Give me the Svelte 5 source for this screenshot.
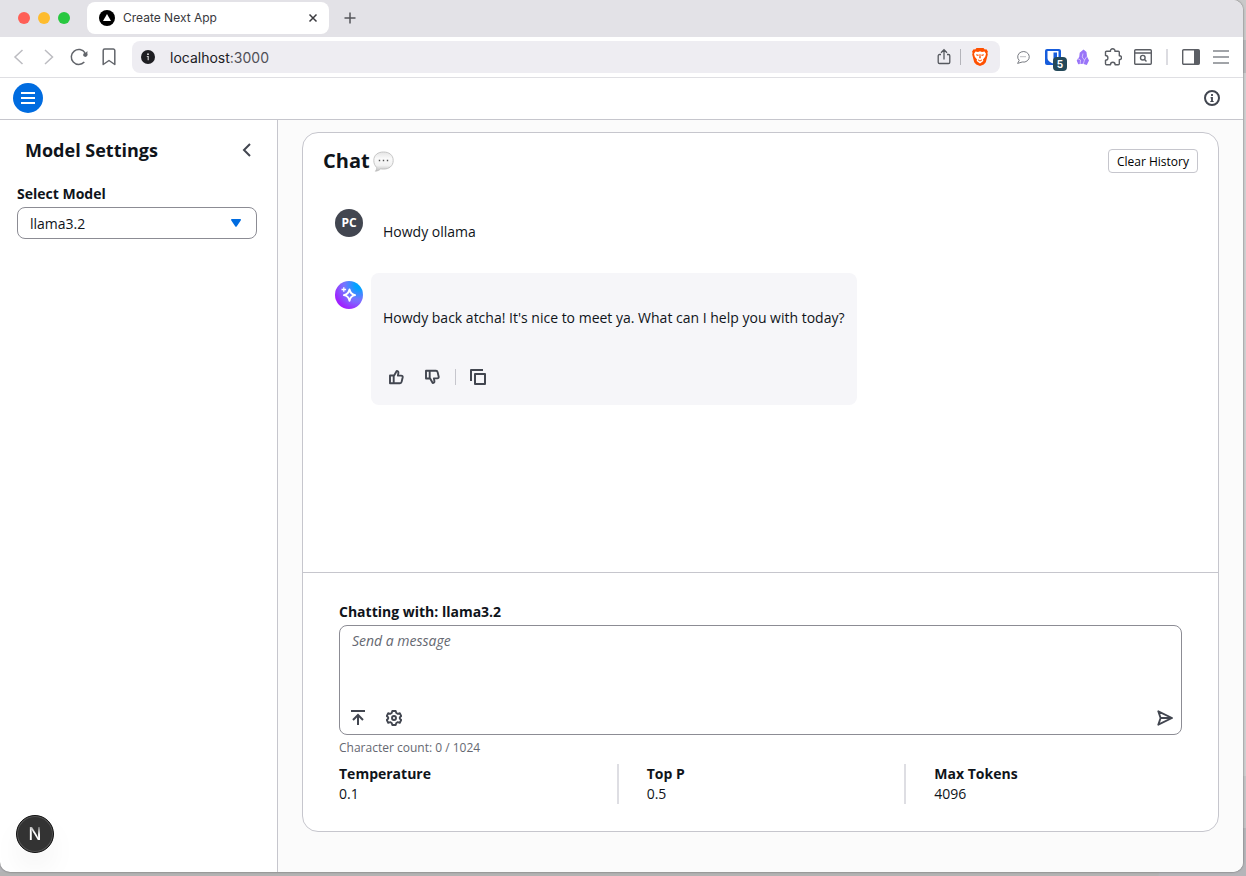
<script>
  let model = $state('llama3.2');
  let message = $state('');
  const params = [
    { name: 'Temperature', value: '0.1' },
    { name: 'Top P', value: '0.5' },
    { name: 'Max Tokens', value: '4096' }
  ];
</script>

<div class="desktop">
  <div class="window">
    <div class="tabbar">
      <div class="lights"><i class="red"></i><i class="amber"></i><i class="green"></i></div>
      <div class="tab">
        <svg width="16" height="16" viewBox="0 0 16 16"><circle cx="8" cy="8" r="8" /><path d="M8 4l4 7H4z" fill="#fff" /></svg>
        <span>Create Next App</span>
        <button aria-label="Close tab">
          <svg width="10" height="10" viewBox="0 0 10 10" stroke="#3b3b40" stroke-width="1.5"><path d="M1.5 1.5l7 7M8.500 1.500l-7 7" /></svg>
        </button>
      </div>
      <button class="newtab" aria-label="New tab">
        <svg width="12" height="12" viewBox="0 0 12 12" stroke="#55555b" stroke-width="1.500"><path d="M6 .5v11M.5 6h11" /></svg>
      </button>
    </div>

    <div class="toolbar">
      <div class="nav">
        <button aria-label="Back"><svg width="20" height="20" viewBox="0 0 20 20" fill="none" stroke="#bcbcc1" stroke-width="1.500"><path d="M13.500 3L6 10l7.500 7" /></svg></button>
        <button aria-label="Forward"><svg width="20" height="20" viewBox="0 0 20 20" fill="none" stroke="#bcbcc1" stroke-width="1.500"><path d="M6 3l7.500 7L6 17" /></svg></button>
        <button aria-label="Reload"><svg width="20" height="20" viewBox="0 0 20 20" fill="none" stroke="#62656b" stroke-width="1.500"><path d="M15.300 15.100a7.500 7.500 0 1 1 .8-9.200" /><circle cx="16.300" cy="7.800" r="2.100" fill="#62656b" stroke="none" /><path d="M18.400 4v4.500H14z" fill="#62656b" stroke="none" /></svg></button>
        <button aria-label="Bookmark"><svg width="20" height="20" viewBox="0 0 20 20" fill="none" stroke="#62656b" stroke-width="1.500" stroke-linejoin="round"><path d="M4.200 3.500a1.500 1.500 0 0 1 1.500-1.500h8.600a1.500 1.500 0 0 1 1.500 1.500V17.500L10 13.500l-5.800 4z" /></svg></button>
      </div>
      <div class="address">
        <svg width="14" height="14" viewBox="0 0 14 14"><circle cx="7" cy="7" r="7" fill="#1e1e22" /><circle cx="7" cy="4.200" r=".9" fill="#eee" /><path d="M5.800 6.500H7.200v3.700" fill="none" stroke="#ccc" stroke-width="1.200" /></svg>
        <span class="url">localhost<em>:3000</em></span>
        <button aria-label="Share"><svg width="16" height="18" viewBox="0 0 16 18" fill="none" stroke="#55585e" stroke-width="1.300"><path d="M5 6.500H3.500A1.300 1.300 0 0 0 2.200 7.800v6.400a1.300 1.300 0 0 0 1.300 1.300h9a1.300 1.300 0 0 0 1.300-1.300V7.800a1.300 1.300 0 0 0-1.300-1.300H11M8 11.500V2M5 4.700L8 1.700l3 3" /></svg></button>
        <i class="sep"></i>
        <button aria-label="Shields"><svg width="16" height="18" viewBox="0 0 16 18"><path d="M4.500 0h7l1.300 1.500 1.600-.2 1.500 2.200-.5 1.500.4 1.500-2 7.700-2 2.300L8 18l-3.800-1.500-2-2.300-2-7.700L.6 5 .1 3.500l1.500-2.200 1.600.2z" fill="#ff5000" /><path d="M3.500 3.500L6 4 8 3.300l2 .7 2.500-.5 1.500 2.200-.8 3.100-2.200 2.600.3 1.500L8 15.500l-3.300-2.600.3-1.500-2.200-2.600L2 5.700z" fill="#fff" /><path d="M4 6.200l2.800.5-.5 1.300-1.800-.4zM12 6.200l-2.800.5.500 1.300 1.800-.4zM7.600 6h.8l.4 4-.8.600-.8-.6zM5.800 11.200L8 12.500l2.200-1.300-.4 1.200L8 13.400l-1.800-1z" fill="#ff5000" /></svg></button>
      </div>
      <div class="extensions">
        <button aria-label="Comments"><svg width="14" height="14" viewBox="0 0 14 14" fill="none" stroke="#777a80"><path d="M3.200 10.400A5.800 5.300 0 1 1 6.200 12L1.600 13.400z" /><path d="M4.500 6.700h5.500" stroke-dasharray="1 1" /></svg></button>
        <button class="vault" aria-label="Password manager, 5 items"><svg width="16" height="16" viewBox="0 0 16 16"><rect width="16" height="16" rx="2" fill="#175ddc" /><path d="M2.500 2h11v7c0 3-3 4.500-5.500 5.500C5.500 13.500 2.500 12 2.500 9z" fill="#fff" /><path d="M8.500 3.500H12V8.500c0 2-1.700 3-3.500 4z" fill="#175ddc" /></svg><b>5</b></button>
        <button aria-label="Notes"><svg width="14" height="17" viewBox="0 0 14 17"><path d="M7.500.500L10.500 3l.5 4.500 2 4-2.200 4.500-4-1.200-4.600.5L.7 11.500l2.500-3.500.5-4.200z" fill="#9974f8" /><path d="M7 4.500L6.200 8 8.500 11 7.300 15M1.500 9.500L4.500 11l-.3 4M8.500 11L10.800 7.500" fill="none" stroke="#e9e0ff" stroke-width=".7" /></svg></button>
        <button aria-label="Extensions"><svg width="18" height="18" viewBox="0 0 18 18" fill="none" stroke="#5b5e64" stroke-width="1.400" stroke-linejoin="round"><path d="M2.500 3.200h4C6.300 1.600 7.200.8 8.700.8s2.400.8 2.200 2.400h3.400c.6 0 1 .4 1 1v3.600c1.400 0 2.200.8 2.200 2s-.8 2-2.200 2v3.900c0 .6-.4 1-1 1h-3.200c0-1.600-.9-2.400-2.300-2.400s-2.300.8-2.300 2.400H2.500c-.6 0-1-.4-1-1v-3.500c1.600 0 2.400-.9 2.400-2.300S3.100 7.500 1.500 7.500V4.200c0-.6.4-1 1-1z" /></svg></button>
        <button aria-label="Search page"><svg width="18" height="16" viewBox="0 0 18 16" fill="none" stroke="#5b5e64" stroke-width="1.400"><rect x=".7" y=".7" width="16.600" height="14.600" rx="1" /><path d="M1 4h16M10.300 10.300l2.200 2.200" /><circle cx="8.800" cy="8.700" r="2.300" /></svg></button>
        <i class="sep wide"></i>
        <button aria-label="Side panel"><svg width="18" height="16" viewBox="0 0 18 16"><rect x=".7" y=".7" width="16.600" height="14.600" rx="1" fill="none" stroke="#5b5e64" stroke-width="1.400" /><path d="M12 1h5v14h-5z" fill="#5b5e64" /></svg></button>
        <button aria-label="Browser menu"><svg width="16" height="14" viewBox="0 0 16 14" stroke="#83868c" stroke-width="1.500"><path d="M0 1h16M0 7h16M0 13h16" /></svg></button>
      </div>
    </div>

    <header class="appbar">
      <button class="menu" aria-label="Open navigation"><svg width="14" height="14" viewBox="0 0 14 14" stroke="#fff" stroke-width="1.800"><path d="M0 2h14M0 7h14M0 12h14" /></svg></button>
      <button aria-label="Information"><svg width="16" height="16" viewBox="0 0 16 16" fill="none" stroke="#424650" stroke-width="2"><circle cx="8" cy="8" r="7" /><path d="M8 7v5M8 4v2" stroke-width="1.800" /><path d="M6.500 7.800H8M6.300 11.500h3.400" stroke-width="1" /></svg></button>
    </header>

    <div class="content">
      <aside>
        <div class="sidehead">
          <h2>Model Settings</h2>
          <button aria-label="Close settings"><svg width="16" height="16" viewBox="0 0 16 16" fill="none" stroke="#424650" stroke-width="2"><path d="M11 2L5 8l6 6" /></svg></button>
        </div>
        <label for="model">Select Model</label>
        <div class="select">
          <select id="model" bind:value={model}><option>llama3.2</option></select>
          <svg width="12" height="10" viewBox="0 0 12 10"><path d="M1.800 1.800h8.400L6 8z" fill="#006ce0" stroke="#006ce0" stroke-width="1.600" stroke-linejoin="round" /></svg>
        </div>
        <button class="dev" aria-label="Developer tools"><span>N</span></button>
      </aside>

      <main>
        <section class="card">
          <div class="cardhead">
            <h1>Chat
              <svg width="21" height="21" viewBox="0 0 21 21"><defs><linearGradient id="bubble" x2="0" y2="1"><stop offset="0" stop-color="#e4e4e4" /><stop offset=".35" stop-color="#fafafa" /><stop offset=".7" stop-color="#f2f2f2" /><stop offset="1" stop-color="#bcbcbc" /></linearGradient></defs><path d="M10.500 1c5.300 0 9.700 2.800 9.700 8.500s-4.400 8.600-9.700 8.600c-1 0-2-.1-2.800-.3C6.500 19.100 4 20.200 2.400 20.200c.8-.8 1.400-2.300 1.300-3.700C2 14.800.8 12.700.8 9.500.8 3.800 5.200 1 10.500 1z" fill="url(#bubble)" stroke="#b9b9b9" stroke-width=".8" /><path d="M5.800 9.500h1.400m2.600 0h1.400m2.600 0h1.400" stroke="#555" stroke-width="1.300" /></svg>
            </h1>
            <button class="clear">Clear History</button>
          </div>

          <div class="messages">
            <div class="message">
              <div class="avatar user">PC</div>
              <div class="bubble"><p>Howdy ollama</p></div>
            </div>
            <div class="message">
              <div class="avatar ai"><svg width="16" height="16" viewBox="0 0 16 16" fill="none" stroke="#fff"><path d="M8.500 2.500c.7 3.600 2 4.900 5.600 5.600-3.600.7-4.900 2-5.600 5.600-.7-3.600-2-4.900-5.600-5.600C6.500 7.400 7.800 6.100 8.500 2.500z" stroke-width="1.900" stroke-linejoin="round" /><path d="M2.800.3v4.400M.5 2.500h4.600" stroke-width="1.300" /></svg></div>
              <div class="bubble reply">
                <p>Howdy back atcha! It's nice to meet ya. What can I help you with today?</p>
                <div class="actions">
                  <button aria-label="Helpful"><svg width="16" height="16" viewBox="0 0 16 16" fill="none" stroke="#424650" stroke-width="1.900" stroke-linejoin="round"><path d="M2 6.500h3.700v7.700H2zM5.700 7.300l3-5.300c1.300 0 1.900.8 1.700 1.900l-.5 2.700h3.300c1.200 0 1.700.6 1.500 1.600l-1.100 4.700c-.2.900-.7 1.300-1.600 1.300H5.700" /></svg></button>
                  <button aria-label="Not helpful"><svg width="16" height="16" viewBox="0 0 16 16" fill="none" stroke="#424650" stroke-width="1.900" stroke-linejoin="round"><path d="M2 9.500h3.700V1.800H2zM5.700 8.700l3 5.300c1.300 0 1.900-.8 1.700-1.900l-.5-2.700h3.300c1.200 0 1.700-.6 1.500-1.600l-1.100-4.700c-.2-.9-.7-1.300-1.600-1.300H5.700" /></svg></button>
                  <i></i>
                  <button aria-label="Copy"><svg width="16" height="16" viewBox="0 0 16 16" fill="none" stroke="#424650" stroke-width="2" stroke-linejoin="round"><path d="M5 5h10v10H5zM1 12V1h12" /></svg></button>
                </div>
              </div>
            </div>
          </div>

          <div class="composer">
            <label for="prompt">Chatting with: {model}</label>
            <div class="prompt">
              <textarea id="prompt" placeholder="Send a message" bind:value={message}></textarea>
              <div class="tools">
                <button aria-label="Upload"><svg width="16" height="16" viewBox="0 0 16 16" fill="none" stroke="#424650" stroke-width="2"><path d="M1 1h14M8 15V5.500M3 10l5-5 5 5" /></svg></button>
                <button aria-label="Settings"><svg width="16" height="16" viewBox="0 0 16 16" fill="none" stroke="#424650" stroke-width="1.900" stroke-linejoin="round"><path d="M6.300 1h3.400l.6 2 1.500.8 2-.6L15.200 6 13.800 7.400v1.200L15.200 10l-1.400 2.800-2-.6-1.500.8-.6 2H6.300l-.6-2-1.500-.8-2 .6L.8 10l1.400-1.400V7.400L.8 6l1.400-2.800 2 .6L5.700 3z" /><circle cx="8" cy="8" r="2" /></svg></button>
                <button class="send" aria-label="Send message"><svg width="16" height="16" viewBox="0 0 16 16" fill="none" stroke="#424650" stroke-width="1.900" stroke-linejoin="round"><path d="M1.300 1.300L15 8 1.300 14.700 3.600 8zM3.600 8H14" /></svg></button>
              </div>
            </div>
            <p class="count">Character count: {message.length} / 1024</p>
            <dl>
              {#each params as param}
                <div><dt>{param.name}</dt><dd>{param.value}</dd></div>
              {/each}
            </dl>
          </div>
        </section>
      </main>
    </div>
  </div>
</div>

<style>
  :global(body) { margin: 0; font-family: "Open Sans", sans-serif; font-size: 14px; line-height: 20px; color: #0f141a; }
  * { box-sizing: border-box; }
  svg { display: block; flex: none; }
  button { display: flex; align-items: center; justify-content: center; flex: none; padding: 0; border: 0; background: none; font: inherit; color: inherit; }
  h1, h2, p, dl, dd { margin: 0; }

  .desktop { min-height: 100vh; display: flex; padding: 0 3px 4px 0; background: linear-gradient(#b3b3b3, #b3b3b3) left bottom / 93% 4px no-repeat, linear-gradient(#c9c9c9 0 40px, #b9b9bb 40px 73px, #cfcfd0 73px 776px, #c4c4c6 776px 828px, #b5b5b9 828px); }
  .window { flex: 1; min-width: 0; display: flex; flex-direction: column; background: #fff; border-radius: 0 10px 10px 10px; overflow: hidden; box-shadow: 0 0 2px #555; }

  .tabbar { flex: none; display: flex; align-items: center; height: 37px; padding: 0 18px 2px; background: #e3e2e7; font: 12px "Inter", sans-serif; color: #38383d; }
  .lights { display: flex; gap: 8px; margin-right: 17px; }
  .lights i { width: 12px; height: 12px; border-radius: 50%; }
  .red { background: #ff5f57; }
  .amber { background: #febc2e; }
  .green { background: #28c840; }
  .tab { display: flex; align-items: center; gap: 8px; width: 242px; height: 32px; padding: 0 11px 0 12px; border-radius: 8px; background: #fff; }
  .tab span { flex: 1; }
  .newtab { margin: 0 15px; }

  .toolbar { flex: none; display: flex; align-items: center; height: 41px; padding: 0 14px 0 9px; border-bottom: 1px solid #dfdfe3; }
  .nav { display: flex; gap: 10px; margin-right: 13px; }
  .address { flex: 1; display: flex; align-items: center; height: 32px; padding: 0 12px 0 9px; border-radius: 8px; background: #eeedf2; }
  .url { flex: 1; margin-left: 15px; font: 14px "Inter", sans-serif; color: #202024; }
  .url em { font-style: normal; color: #505057; }
  .sep { width: 1px; height: 16px; margin: 0 11px 0 8px; background: #b4b4ba; }
  .wide { width: 2px; margin: 0; background: #dcdce1; }
  .extensions { display: flex; align-items: center; gap: 15px; margin-left: 16px; }
  .extensions button:nth-child(3) { margin-right: -1px; }
  .extensions button:nth-child(4) { margin-right: -3px; }
  .extensions button:nth-child(5), .extensions button:nth-child(7) { margin-right: -2px; }
  .extensions .sep { margin: 0 -1px 0 1px; }
  .vault { position: relative; }
  .vault b { position: absolute; left: 8px; top: 8px; width: 14px; height: 14px; border-radius: 4px; background: #24495a; color: #fff; font: bold 10px/14px "Inter", sans-serif; }

  .appbar { flex: none; display: flex; align-items: center; justify-content: space-between; height: 42px; padding: 0 23px 1px 13px; border-bottom: 1px solid #c6c6cd; }
  .menu { width: 30px; height: 30px; border-radius: 50%; background: #006ce0; }

  .content { flex: 1; display: flex; }
  aside { flex: none; display: flex; flex-direction: column; width: 278px; padding: 18px 20px 19px 16px; border-right: 1px solid #c6c6cd; }
  .sidehead { display: flex; align-items: center; justify-content: space-between; padding: 0 2px 0 9px; margin-bottom: 22px; }
  h2 { font-size: 18px; line-height: 24px; }
  label { display: block; font-weight: 700; }
  aside label { margin: 0 0 3px 1px; }
  .select { display: grid; align-items: center; margin-left: 1px; }
  .select > * { grid-area: 1 / 1; }
  .select svg { justify-self: end; margin-right: 15px; pointer-events: none; }
  select { appearance: none; width: 100%; height: 32px; padding: 1px 32px 0 12px; border: 1px solid #8c8c94; border-radius: 8px; background: #fff; font: inherit; color: inherit; }
  .dev { width: 38px; height: 38px; margin-top: auto; border: 1px solid #111; border-radius: 50%; background: #333; box-shadow: inset 0 0 0 1px #555, 0 16px 32px -8px #0002; font: 500 17px "Inter", sans-serif; }
  .dev span { color: transparent; background: linear-gradient(25deg, #fff 55%, #666 85%); background-clip: text; }

  main { flex: 1; min-width: 0; display: flex; padding: 12px 24px 40px; background: #fbfbfb; }
  .card { flex: 1; min-width: 0; display: flex; flex-direction: column; border: 1px solid #c6c6cd; border-radius: 16px; background: #fff; }
  .cardhead { display: flex; align-items: center; justify-content: space-between; padding: 16px 20px 0; }
  h1 { display: flex; align-items: center; gap: 3px; font-size: 20px; line-height: 24px; }
  .clear { height: 24px; padding: 1px 8px 0; border: 1px solid #c6c6cd; border-radius: 4px; background: #fff; font-size: 12px; color: #000; }
  .messages { flex: 1; display: flex; flex-direction: column; gap: 16px; padding: 28px 32px; }
  .message { display: flex; align-items: flex-start; gap: 8px; }
  .avatar { flex: none; display: flex; align-items: center; justify-content: center; width: 28px; height: 28px; margin-top: 8px; border-radius: 50%; }
  .user { background: #424650; color: #fff; font-size: 12px; font-weight: 700; }
  .ai { background: radial-gradient(circle at 85% 15%, #00a3ff 0 10%, #7575ff 42%, #8065ff 52%, #a020ff 78%); }
  .bubble { min-width: 0; padding: 21px 12px 15px; }
  .reply { padding: 35px 12px 16px; border-radius: 8px; background: #f6f6f9; }
  .actions { display: flex; align-items: center; gap: 20px; margin-top: 37px; padding: 4px 5px; }
  .actions i { width: 1px; height: 16px; margin: 0 -6px 0 -5px; background: #c6c6cd; }

  .composer { flex: none; padding: 29px 36px 27px; border-top: 1px solid #c6c6cd; }
  .prompt { display: flex; flex-direction: column; height: 110px; margin: 3px 0 5px; border: 1px solid #8c8c94; border-radius: 8px; }
  textarea { flex: 1; min-height: 0; padding: 5px 12px 0; border: 0; outline: 0; resize: none; background: none; font: inherit; color: inherit; }
  textarea::placeholder { color: #656871; font-style: italic; }
  .tools { display: flex; align-items: center; gap: 20px; padding: 8px; padding-left: 10px; }
  .send { margin-left: auto; }
  .count { font-size: 12px; line-height: 16px; color: #656871; }
  dl { display: grid; grid-template-columns: repeat(3, 1fr); margin: 8px -10px 0; }
  dl div { padding-left: 28px; border-left: 2px solid #dedee3; }
  dl div:first-child { padding-left: 10px; border: 0; }
  dt { font-weight: 700; }
</style>
